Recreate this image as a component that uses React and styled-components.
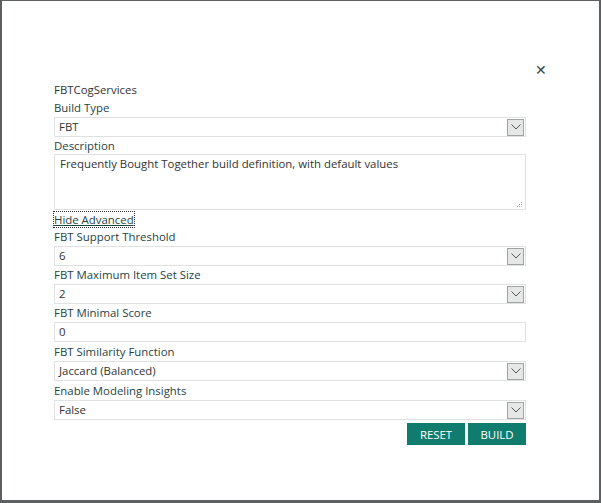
import styled, { createGlobalStyle } from "styled-components";

const GlobalStyle = createGlobalStyle`
  html, body {
    margin: 0;
    padding: 0;
    background: #ffffff;
  }
  body {
    font-family: "Open Sans", "Noto Sans", sans-serif;
  }
`;

const fields = [
  { label: "FBT Support Threshold", value: "6", select: true, extra: 0 },
  { label: "FBT Maximum Item Set Size", value: "2", select: true, extra: 0 },
  { label: "FBT Minimal Score", value: "0", select: false, extra: 0 },
  { label: "FBT Similarity Function", value: "Jaccard (Balanced)", select: true, extra: 1 },
  { label: "Enable Modeling Insights", value: "False", select: true, extra: 1 },
];

const Chevron = () => (
  <svg width="10" height="6" viewBox="0 0 10 6">
    <path d="M0.5 0.5 L5 5 L9.5 0.5" fill="none" stroke="#555" strokeWidth="1" />
  </svg>
);

const Select = ({ value }) => (
  <Box>
    <Value>{value}</Value>
    <ArrowBox>
      <Chevron />
    </ArrowBox>
  </Box>
);

const App = () => {
  return (
    <>
      <GlobalStyle />
      <Window>
        <Header>
          <Close>✕</Close>
        </Header>
        <Form>
          <Title>FBTCogServices</Title>
          <Label>Build Type</Label>
          <Select value="FBT" />
          <Label>Description</Label>
          <TextArea>
            <Value>Frequently Bought Together build definition, with default values</Value>
            <Grip>
              <svg width="7" height="7" viewBox="0 0 7 7">
                <rect x="5" y="1" width="1" height="1" fill="#9aa" />
                <rect x="3" y="3" width="1" height="1" fill="#9aa" />
                <rect x="5" y="3" width="1" height="1" fill="#9aa" />
                <rect x="1" y="5" width="1" height="1" fill="#9aa" />
                <rect x="3" y="5" width="1" height="1" fill="#9aa" />
                <rect x="5" y="5" width="1" height="1" fill="#9aa" />
              </svg>
            </Grip>
          </TextArea>
          <Toggle>Hide Advanced</Toggle>
          {fields.map((f) => (
            <Field key={f.label} $extra={f.extra}>
              <Label>{f.label}</Label>
              {f.select ? (
                <Select value={f.value} />
              ) : (
                <Box>
                  <Value>{f.value}</Value>
                </Box>
              )}
            </Field>
          ))}
          <Buttons>
            <Button>RESET</Button>
            <Button>BUILD</Button>
          </Buttons>
        </Form>
      </Window>
    </>
  );
};

export default App;

const Window = styled.div`
  box-sizing: border-box;
  width: 601px;
  height: 503px;
  border-style: solid;
  border-color: #5c6060;
  border-width: 1px 2px 3px 2px;
  background: #ffffff;
  display: flex;
  flex-direction: column;
`;

const Header = styled.div`
  display: flex;
  justify-content: flex-end;
  height: 80px;
  padding: 59px 52px 0 0;
  box-sizing: border-box;
`;

const Close = styled.div`
  font-size: 14px;
  line-height: 20px;
  color: #3a4444;
`;

const Form = styled.div`
  display: flex;
  flex-direction: column;
  width: 472px;
  margin-left: 52px;
  font-size: 11.4px;
`;

const Title = styled.div`
  font-size: 11.4px;
  line-height: 18px;
  color: #333;
`;

const Label = styled.div`
  font-size: 11.4px;
  line-height: 18px;
  color: #1f4444;
`;

const Field = styled.div`
  display: flex;
  flex-direction: column;
  margin-top: ${(p) => p.$extra}px;
`;

const Box = styled.div`
  box-sizing: border-box;
  height: 20px;
  border: 1px solid #e0e2e2;
  display: flex;
  align-items: center;
  justify-content: space-between;
  background: #fff;
`;

const Value = styled.span`
  font-size: 11.4px;
  color: #333;
  padding-left: 4px;
  line-height: 18px;
`;

const ArrowBox = styled.div`
  box-sizing: border-box;
  width: 17px;
  height: 17px;
  margin-right: 1px;
  border: 1px solid #9ea3a3;
  background: #e6e8e8;
  display: flex;
  align-items: center;
  justify-content: center;
`;

const TextArea = styled.div`
  box-sizing: border-box;
  height: 56px;
  margin-top: -1px;
  border: 1px solid #e0e2e2;
  position: relative;
  padding: 0 5px;
  ${Value} {
    padding-left: 0;
  }
`;

const Grip = styled.div`
  position: absolute;
  right: 2px;
  bottom: 1px;
  line-height: 0;
`;

const Toggle = styled.div`
  align-self: flex-start;
  font-size: 11.4px;
  line-height: 15px;
  margin-top: 2px;
  margin-bottom: 1px;
  color: #1f4444;
  text-decoration: underline;
  outline: 1px dotted #333;
  outline-offset: 0;
`;

const Buttons = styled.div`
  display: flex;
  justify-content: flex-end;
  gap: 3px;
  margin-top: 3px;
`;

const Button = styled.button`
  width: 58px;
  height: 22px;
  border: none;
  background: #107c6e;
  color: #ffffff;
  font-family: "Open Sans", "Noto Sans", sans-serif;
  font-size: 11.4px;
  padding: 0;
  cursor: pointer;
`;
